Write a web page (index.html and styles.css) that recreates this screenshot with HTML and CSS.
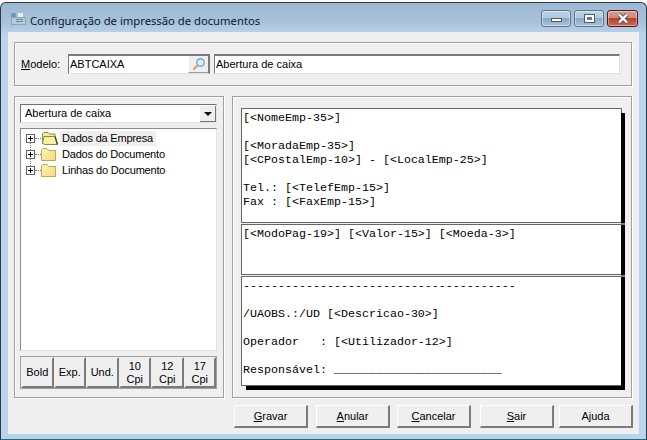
FILE: index.html
```html
<!DOCTYPE html>
<html lang="pt">
<head>
  <meta charset="UTF-8">
  <meta name="viewport" content="width=device-width, initial-scale=1.0">
  <title>Configuração de impressão de documentos</title>
  <link rel="stylesheet" href="styles.css">
</head>
<body>
  <div class="window">
    <div class="titlebar">
      <svg class="app-icon" width="15" height="13" viewBox="0 0 15 13">
        <rect x="6.5" y="0.5" width="6" height="5" fill="#e6eef4" stroke="#a9bccb"/>
        <rect x="0.5" y="1.5" width="4" height="7" fill="#4fa5b0" stroke="#7d9fb0"/>
        <rect x="0.5" y="5.5" width="14" height="7" fill="#b4cbdc" stroke="#8aa5b8"/>
        <rect x="5" y="7" width="7" height="1" fill="#6d8597"/>
        <rect x="5" y="9" width="7" height="1" fill="#6d8597"/>
      </svg>
      <span class="title">Configuração de impressão de documentos</span>
      <div class="caption-btns">
        <button class="cap cap-min"><span class="glyph-min"></span></button>
        <button class="cap cap-max"><span class="glyph-max"></span></button>
        <button class="cap cap-close">
          <svg width="14" height="11" viewBox="0 0 14 11">
            <path d="M3 1.5 L11 9.5 M11 1.5 L3 9.5" stroke="#4a5560" stroke-width="4"/>
            <path d="M3 1.5 L11 9.5 M11 1.5 L3 9.5" stroke="#fff" stroke-width="2.4"/>
          </svg>
        </button>
      </div>
    </div>

    <div class="client">
      <div class="group model-group">
        <label class="model-label"><u>M</u>odelo:</label>
        <div class="field code-field">
          <span class="field-text">ABTCAIXA</span>
          <span class="lookup">
            <svg width="14" height="14" viewBox="0 0 14 14">
              <circle cx="8.5" cy="5.5" r="3.8" fill="#d8ecfa" stroke="#7ba6c8" stroke-width="1.4"/>
              <path d="M5.5 8.5 L1.5 12.5" stroke="#c9a36a" stroke-width="2"/>
            </svg>
          </span>
        </div>
        <div class="field name-field"><span class="field-text">Abertura de caixa</span></div>
      </div>

      <div class="main">
        <div class="group left-group">
          <div class="combo">
            <span class="combo-text">Abertura de caixa</span>
            <span class="combo-arrow"><i class="arrow"></i></span>
          </div>
          <div class="tree">
            <div class="tree-row">
              <span class="expander"></span>
              <svg class="folder" width="18" height="15" viewBox="0 0 18 15">
                <path d="M1.5 12.5 V3 L3 1.5 H7 L8.5 3 H14 V6" fill="#f7ec9a" stroke="#8c8a45"/>
                <path d="M1.5 12.5 L3 5.5 H14 L16.5 13.5 H4 Z" fill="#fbf0a0" stroke="#8c8a45"/>
                <path d="M14 5.5 L16.5 13.5" stroke="#45451f" stroke-width="1.4"/>
              </svg>
              <span class="node-label node-selected">Dados da Empresa</span>
            </div>
            <div class="tree-row">
              <span class="expander"></span>
              <svg class="folder" width="18" height="15" viewBox="0 0 18 15">
                <defs>
                  <linearGradient id="fold" x1="0" y1="0" x2="1" y2="1">
                    <stop offset="0" stop-color="#fff6b8"/>
                    <stop offset="1" stop-color="#f8d878"/>
                  </linearGradient>
                </defs>
                <path d="M0.5 13.5 V3 L2 1.5 H6 L7.5 3.5 H14.5 V13.5 Z" fill="url(#fold)" stroke="#c0a850"/>
              </svg>
              <span class="node-label">Dados do Documento</span>
            </div>
            <div class="tree-row">
              <span class="expander"></span>
              <svg class="folder" width="18" height="15" viewBox="0 0 18 15">
                <path d="M0.5 13.5 V3 L2 1.5 H6 L7.5 3.5 H14.5 V13.5 Z" fill="url(#fold)" stroke="#c0a850"/>
              </svg>
              <span class="node-label">Linhas do Documento</span>
            </div>
          </div>
          <div class="format-bar">
            <button class="fmt">Bold</button>
            <button class="fmt">Exp.</button>
            <button class="fmt">Und.</button>
            <button class="fmt">10<br>Cpi</button>
            <button class="fmt">12<br>Cpi</button>
            <button class="fmt">17<br>Cpi</button>
          </div>
        </div>

        <div class="group right-group">
          <div class="paper paper-head">
            <pre class="mono">[&lt;NomeEmp-35&gt;]

[&lt;MoradaEmp-35&gt;]
[&lt;CPostalEmp-10&gt;] - [&lt;LocalEmp-25&gt;]

Tel.: [&lt;TelefEmp-15&gt;]
Fax : [&lt;FaxEmp-15&gt;]</pre>
          </div>
          <div class="paper paper-mid">
            <pre class="mono">[&lt;ModoPag-19&gt;] [&lt;Valor-15&gt;] [&lt;Moeda-3&gt;]</pre>
          </div>
          <div class="paper paper-foot">
            <pre class="mono">---------------------------------------

/UAOBS.:/UD [&lt;Descricao-30&gt;]

Operador   : [&lt;Utilizador-12&gt;]

Responsável: ________________________</pre>
          </div>
        </div>
      </div>

      <div class="actions">
        <button class="action act-gravar"><u>G</u>ravar</button>
        <button class="action act-anular"><u>A</u>nular</button>
        <button class="action act-cancelar"><u>C</u>ancelar</button>
        <button class="action act-sair"><u>S</u>air</button>
        <button class="action act-ajuda">A<u>j</u>uda</button>
      </div>
    </div>
  </div>
</body>
</html>
```

FILE: styles.css
```css
* { box-sizing: border-box; }
html, body { margin: 0; padding: 0; }
body { width: 647px; height: 440px; background: #fff; font-family: "Liberation Sans", Arial, sans-serif; font-size: 11px; color: #000; overflow: hidden; }
button { font-family: inherit; font-size: inherit; color: inherit; padding: 0; margin: 0; }

.window { width: 647px; height: 438px; margin-top: 2px; padding: 0 7px 5px; display: flex; flex-direction: column; border: 1px solid #2a3b46; border-bottom-color: #1d6f78; border-radius: 6px 6px 0 0; background: linear-gradient(180deg, #9db8d2 0, #a9c3dd 20px, #b9d4ec 32px, #b9d4ec 100%); }

.titlebar { height: 29px; flex: none; display: flex; align-items: center; margin: 0 -7px 0 -7px; padding-left: 10px; }
.app-icon { flex: none; margin-right: 4px; margin-top: 2px; }
.title { font-family: "Noto Sans", sans-serif; font-size: 11.25px; color: #10181f; margin-top: 6px; white-space: nowrap; }
.caption-btns { margin-left: auto; display: flex; gap: 3px; margin-top: 2px; margin-right: 8px; }
.cap { width: 30px; height: 17px; border: 1px solid #5f7488; border-radius: 3px; display: flex; align-items: center; justify-content: center; background: linear-gradient(180deg, #bcd2e8 0, #b1c9e1 50%, #8ba8c5 50%, #a9c3dc 100%); box-shadow: inset 0 0 0 1px rgba(255,255,255,0.4); }
.cap-close { width: 31px; border-color: #4d1b1e; background: linear-gradient(180deg, #dc9a90 0, #d08678 50%, #b8402f 50%, #cf6a52 100%); }
.glyph-min { width: 11px; height: 4px; background: #fff; border: 1px solid #4a5a6a; margin-top: 3px; }
.glyph-max { width: 11px; height: 9px; background: #fff; border: 1px solid #4a5a6a; display: flex; align-items: center; justify-content: center; }
.glyph-max::after { content: ""; width: 5px; height: 3px; background: #6a7a8a; }

.client { flex: 1; background: #efefef; padding: 10px 7px 4px 6px; display: flex; flex-direction: column; }
.group { border: 1px solid #a0a0a0; box-shadow: inset 1px 1px 0 #fff, 1px 1px 0 #fff; }

.model-group { height: 44px; flex: none; display: flex; align-items: center; padding: 0 11px 0 6px; }
.model-label { width: 47px; flex: none; }
.field { height: 20px; background: #fff; border: 1px solid #e2e2e2; border-top: 2px solid #7a7a7a; border-left-color: #7a7a7a; display: flex; align-items: center; }
.field-text { padding-left: 1px; margin-top: -1px; }
.code-field { width: 142px; flex: none; margin-right: 4px; border-right: 2px solid #7a7a7a; }
.lookup { margin-left: auto; width: 20px; height: 17px; background: #efefef; border-bottom: 1px solid #999; border-left: 1px solid #fff; display: flex; align-items: center; justify-content: center; }
.name-field { flex: 1; }

.main { flex: none; display: flex; gap: 8px; margin-top: 10px; height: 302px; }
.left-group { width: 210px; flex: none; padding: 7px 6px 8px 5px; display: flex; flex-direction: column; }
.right-group { width: 400px; flex: none; padding: 11px 10px 0 8px; }

.combo { height: 19px; flex: none; background: #fff; border: 1px solid #6f6f6f; border-right-color: #e2e2e2; border-bottom-color: #e2e2e2; display: flex; align-items: center; padding-left: 4px; }
.combo-text { flex: 1; margin-top: -1px; }
.combo-arrow { width: 16px; height: 16px; background: #efefef; border-right: 1px solid #777; border-bottom: 1px solid #777; display: flex; align-items: center; justify-content: center; }
.arrow { width: 0; height: 0; border-left: 4px solid transparent; border-right: 4px solid transparent; border-top: 4px solid #000; margin-top: 1px; }

.tree { flex: 1; margin: 5px 0; background: #fff; border: 1px solid #8a8a8a; border-right-color: #e2e2e2; border-bottom-color: #e2e2e2; padding: 1px 0 0 5px; }
.tree-row { height: 16px; display: flex; align-items: center; position: relative; }
.tree-row + .tree-row::before { content: ""; position: absolute; left: 4px; top: -4px; height: 8px; border-left: 1px dotted #777; }
.expander { width: 9px; height: 9px; flex: none; border: 1px solid #666; background: linear-gradient(#000, #000) center / 5px 1px no-repeat, linear-gradient(#000, #000) center / 1px 5px no-repeat, #fff; margin-right: 6px; position: relative; }
.expander::after { content: ""; position: absolute; left: 8px; top: 3px; width: 6px; border-top: 1px dotted #777; }
.folder { flex: none; margin-right: 1px; }
.node-label { padding: 0 3px 0 2px; white-space: nowrap; line-height: 15px; letter-spacing: -0.2px; }
.node-selected { background: #efefef; }

.format-bar { height: 33px; flex: none; display: flex; background: #a0a0a0; padding: 1px; }
.fmt { flex: 1; border: 2px solid #efefef; border-right-color: #7a7a7a; border-bottom-color: #7a7a7a; background: #efefef; line-height: 13px; text-align: center; }

.paper { width: 381px; background: #fff; border: 1px solid #666; position: relative; }
.paper-head { height: 115px; margin-bottom: 1px; }
.paper-mid { height: 51px; margin-bottom: 1px; }
.paper-foot { height: 110px; }
.paper::after { content: ""; position: absolute; top: 4px; right: -4px; bottom: -2px; width: 4px; background: #000; }
.paper-mid::after, .paper-foot::after { top: -2px; border-top: 2px solid #777; }
.paper-foot::after { bottom: -5px; }
.paper-foot::before { content: ""; position: absolute; left: 4px; right: -4px; bottom: -5px; height: 4px; background: #000; }
.mono { margin: 0; padding: 2px 0 0 1px; font-family: "Liberation Mono", "Courier New", monospace; font-size: 11.67px; line-height: 14px; }

.actions { flex: none; display: flex; margin-top: 7px; padding-left: 220px; height: 23px; }
.action { height: 23px; width: 74px; flex: none; background: #efefef; border: 1px solid #fff; border-right: 2px solid #7a7a7a; border-bottom: 2px solid #7a7a7a; text-align: center; }
.act-gravar { margin-right: 8px; }
.act-anular { margin-right: 7px; }
.act-cancelar { margin-right: 9px; }
.act-sair { margin-right: 5px; }
```
